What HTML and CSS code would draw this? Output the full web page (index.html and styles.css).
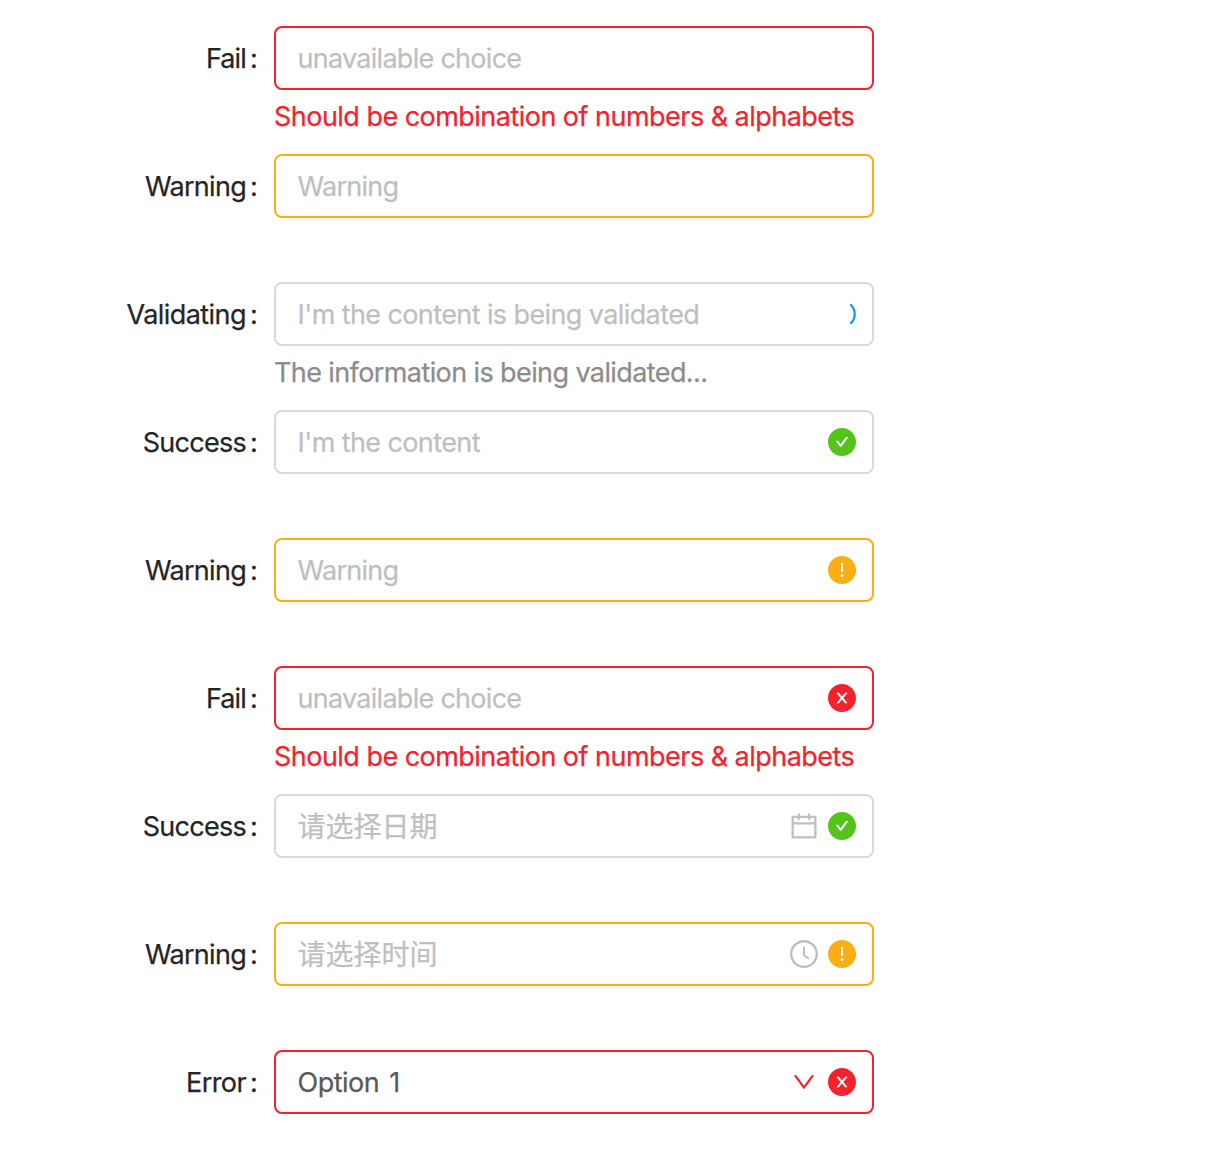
FILE: index.html
```
<!DOCTYPE html>
<html lang="en">
<head>
<meta charset="utf-8">
<title>Form validation</title>
<link rel="stylesheet" href="styles.css">
</head>
<body>
<svg class="sprite" aria-hidden="true">
  <symbol id="check" viewBox="64 64 896 896"><path d="M512 64C264.600 64 64 264.600 64 512s200.600 448 448 448 448-200.600 448-448S759.400 64 512 64zm193.500 301.700l-210.600 292a31.800 31.800 0 0 1-51.700 0L318.500 484.900c-3.800-5.300 0-12.700 6.500-12.700h46.900c10.200 0 19.900 4.900 25.900 13.300l71.200 98.800 157.200-218c6-8.300 15.600-13.300 25.900-13.300H699c6.500 0 10.300 7.400 6.500 12.700z"/></symbol>
  <symbol id="exclamation" viewBox="64 64 896 896"><path d="M512 64C264.600 64 64 264.600 64 512s200.600 448 448 448 448-200.600 448-448S759.400 64 512 64zm-32 232c0-4.400 3.600-8 8-8h48c4.400 0 8 3.600 8 8v272c0 4.400-3.600 8-8 8h-48c-4.400 0-8-3.600-8-8V296zm32 440a48.010 48.010 0 0 1 0-96 48.010 48.010 0 0 1 0 96z"/></symbol>
  <symbol id="close" viewBox="64 64 896 896"><path d="M512 64C264.600 64 64 264.600 64 512s200.600 448 448 448 448-200.600 448-448S759.400 64 512 64zm165.400 618.200l-66-.3L512 563.400l-99.300 118.400-66.100.3c-4.400 0-8-3.500-8-8 0-1.900.7-3.700 1.900-5.200l130.100-155L340.500 359a8.320 8.320 0 0 1-1.900-5.200c0-4.400 3.600-8 8-8l66.100.3L512 464.600l99.300-118.400 66-.3c4.400 0 8 3.500 8 8 0 1.900-.7 3.700-1.900 5.200L553.500 514l130 155c1.200 1.500 1.900 3.300 1.900 5.200 0 4.400-3.600 8-8 8z"/></symbol>
  <symbol id="calendar" viewBox="64 64 896 896"><path d="M880 184H712v-64c0-4.400-3.600-8-8-8h-56c-4.400 0-8 3.600-8 8v64H384v-64c0-4.400-3.600-8-8-8h-56c-4.400 0-8 3.600-8 8v64H144c-17.700 0-32 14.300-32 32v664c0 17.700 14.300 32 32 32h736c17.700 0 32-14.300 32-32V216c0-17.700-14.300-32-32-32zm-40 656H184V460h656v380zM184 392V256h128v48c0 4.400 3.600 8 8 8h56c4.400 0 8-3.600 8-8v-48h256v48c0 4.400 3.600 8 8 8h56c4.400 0 8-3.600 8-8v-48h128v136H184z"/></symbol>
  <symbol id="clock" viewBox="64 64 896 896"><path d="M512 64C264.600 64 64 264.600 64 512s200.600 448 448 448 448-200.600 448-448S759.400 64 512 64zm0 820c-205.400 0-372-166.600-372-372s166.600-372 372-372 372 166.600 372 372-166.600 372-372 372z"/><path d="M686.700 638.600L544.100 535.500V288c0-4.400-3.600-8-8-8H488c-4.400 0-8 3.600-8 8v275.400c0 2.600 1.200 5 3.300 6.500l165.400 120.600c3.600 2.600 8.600 1.800 11.200-1.700l28.600-39c2.600-3.700 1.800-8.700-1.800-11.200z"/></symbol>
  <symbol id="down" viewBox="64 64 896 896"><path d="M884 256h-75c-5.100 0-9.900 2.500-12.900 6.600L512 654.200 227.900 262.600c-3-4.100-7.800-6.600-12.900-6.600h-75c-6.500 0-10.300 7.400-6.500 12.700l352.600 486.100c12.800 17.600 39 17.600 51.700 0l352.600-486.100c3.900-5.300.1-12.700-6.400-12.700z"/></symbol>
  <symbol id="loading" viewBox="0 0 28 28"><path d="M23 4.900A13 13 0 0 1 23 23.100" fill="none" stroke="currentColor" stroke-width="2.200" stroke-linecap="round"/></symbol>
</svg>
<form class="form">
  <div class="item is-error">
    <label class="label"><span class="t-fail">Fail</span><span class="colon">:</span></label>
    <div class="control"><span class="value t-choice">unavailable choice</span></div>
    <div class="help"><span class="t-should">Should be combination of numbers &amp; alphabets</span></div>
  </div>
  <div class="item is-warning">
    <label class="label"><span class="t-warning">Warning</span><span class="colon">:</span></label>
    <div class="control"><span class="value t-warning">Warning</span></div>
  </div>
  <div class="item is-validating">
    <label class="label"><span class="t-validating">Validating</span><span class="colon">:</span></label>
    <div class="control"><span class="value t-validated">I'm the content is being validated</span><svg class="icon status"><use href="#loading"/></svg></div>
    <div class="help"><span class="t-info">The information is being validated...</span></div>
  </div>
  <div class="item is-success">
    <label class="label"><span class="t-success">Success</span><span class="colon">:</span></label>
    <div class="control"><span class="value t-content">I'm the content</span><svg class="icon status"><use href="#check"/></svg></div>
  </div>
  <div class="item is-warning">
    <label class="label"><span class="t-warning">Warning</span><span class="colon">:</span></label>
    <div class="control"><span class="value t-warning">Warning</span><svg class="icon status"><use href="#exclamation"/></svg></div>
  </div>
  <div class="item is-error">
    <label class="label"><span class="t-fail">Fail</span><span class="colon">:</span></label>
    <div class="control"><span class="value t-choice">unavailable choice</span><svg class="icon status"><use href="#close"/></svg></div>
    <div class="help"><span class="t-should">Should be combination of numbers &amp; alphabets</span></div>
  </div>
  <div class="item is-success">
    <label class="label"><span class="t-success">Success</span><span class="colon">:</span></label>
    <div class="control"><span class="value cjk">请选择日期</span><svg class="icon picker"><use href="#calendar"/></svg><svg class="icon status"><use href="#check"/></svg></div>
  </div>
  <div class="item is-warning">
    <label class="label"><span class="t-warning">Warning</span><span class="colon">:</span></label>
    <div class="control"><span class="value cjk">请选择时间</span><svg class="icon picker"><use href="#clock"/></svg><svg class="icon status"><use href="#exclamation"/></svg></div>
  </div>
  <div class="item is-error">
    <label class="label"><span class="t-error">Error</span><span class="colon">:</span></label>
    <div class="control"><span class="value selected t-option">Option 1</span><svg class="icon arrow"><use href="#down"/></svg><svg class="icon status"><use href="#close"/></svg></div>
  </div>
</form>
</body>
</html>
```
FILE: styles.css
```
* { box-sizing: border-box; }
body {
  margin: 0;
  background: #fff;
  color: #262626;
  font: 27px/44px Inter, "Noto Sans CJK SC", sans-serif;
  -webkit-text-stroke: 0.25px currentColor;
}
.sprite { display: none; }
.form { padding-top: 26px; }
.item {
  display: grid;
  grid-template-columns: 258px 600px;
  grid-template-rows: 64px 64px;
  column-gap: 16px;
  height: 128px;
  --state: #d9d9d9;
}
.label, .control { display: flex; align-items: center; }
.label { justify-content: flex-end; padding-top: 2px; white-space: nowrap; }
.colon { width: 8px; margin-left: 4px; }
.control {
  padding: 0 16px 0 21.5px;
  border: 2px solid var(--state);
  border-radius: 8px;
}
.value { flex: 1; padding-top: 2px; color: #bfbfbf; white-space: nowrap; }
.value.selected { color: #595959; }
.value.cjk {
  padding: 0 0 2px;
  font: 28px/44px "Noto Sans CJK SC", sans-serif;
}
.help { grid-column: 2; padding-top: 5px; color: #8c8c8c; white-space: nowrap; }
.icon { width: 28px; height: 28px; flex: none; fill: currentColor; }
.picker { margin-right: 10px; color: #bfbfbf; }
.arrow { width: 24px; height: 24px; margin-right: 12px; color: #f5222d; }
.is-error { --state: #f5222d; }
.is-error .help, .is-error .status { color: #f5222d; }
.is-warning { --state: #faad14; }
.is-warning .status { color: #faad14; }
.is-success .status { color: #52c41a; }
.is-validating .status { color: #1890ff; }

/* Tracking per string */
.t-fail { letter-spacing: -0.85px; }
.t-warning, .t-success, .t-choice { letter-spacing: -0.72px; }
.t-validating { letter-spacing: -0.55px; }
.t-error, .t-content, .t-validated { letter-spacing: -0.6px; }
.t-info { letter-spacing: -0.6px; }
.t-should { letter-spacing: -0.53px; }
.t-option { letter-spacing: -0.5px; word-spacing: 3px; }
```
